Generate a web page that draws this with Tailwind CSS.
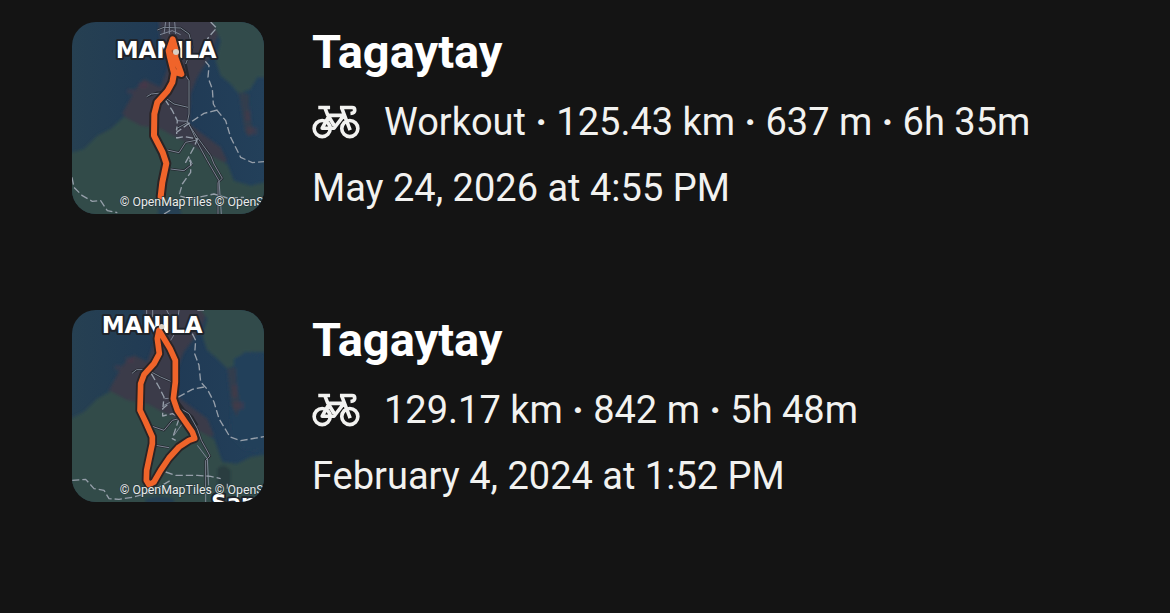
<!DOCTYPE html>
<html lang="en">
<head>
<meta charset="utf-8">
<meta name="viewport" content="width=device-width, initial-scale=1">
<title>Activities</title>
<script src="https://cdn.jsdelivr.net/npm/@tailwindcss/browser@4"></script>
</head>
<body class="min-h-screen bg-[#141414] font-['Roboto',sans-serif] text-[#f2f2f0]">
<svg class="absolute size-0" aria-hidden="true">
  <defs>
    <linearGradient id="sea" x2="1"><stop offset="0" stop-color="#264052"/><stop offset=".5" stop-color="#203a55"/><stop offset="1" stop-color="#23405a"/></linearGradient>
    <filter id="soft" x="-10%" y="-10%" width="120%" height="120%"><feGaussianBlur stdDeviation="5"/></filter>
  </defs>
  <symbol id="bike" viewBox="35 31 146 102">
    <g fill="none" stroke="currentColor" stroke-width="11" stroke-linejoin="round">
      <circle cx="66" cy="102" r="24.5"/>
      <circle cx="150" cy="102" r="24.5"/>
      <path d="M54 38H90M74 38L82 59L102 92M82 62H130M132 62L102 101H66L86 65M120 38H157Q165 38 165 46Q165 55 152 56M125 38L151 107"/>
    </g>
  </symbol>
</svg>
<main class="flex flex-col gap-22 px-18 pt-[22px]">
  <article class="flex gap-12">
    <svg class="size-48 shrink-0 rounded-3xl" viewBox="24 24 576 576" role="img" aria-label="Route map from Manila to Tagaytay">
      <path fill="url(#sea)" d="M24 24H600V600H24Z"/>
      <g filter="url(#soft)">
        <path fill="#3a3b4a" d="M284 10H470L460 70L430 140L400 190L380 240L375 330L470 400L490 440L420 470L300 400L190 320L175 298L215 225L240 195L290 220L315 150L290 90Z"/>
        <path fill="#314c4b" d="M440 10H620V190L580 190L560 225L525 240L500 210L470 185L455 140L470 80Z"/>
        <path fill="#304b49" d="M10 420L60 405L100 365L140 345L180 308L230 335L290 345L335 370L370 385L440 425L490 450L510 500L560 515L620 500V620H10Z"/>
        <path fill="#333d4d" d="M525 235L555 240L556 300L568 350L556 370L542 350Z"/>
        <path fill="#553845" opacity=".4" d="M225 205H250V222H225ZM190 225H212V240H190ZM545 290H560V320H545ZM548 340H580V362H548Z"/>
        <path fill="#263f53" d="M285 570Q315 555 345 575L355 610H280Z"/>
      </g>
      <g fill="none" stroke-linejoin="round">
        <path stroke="#24282f" stroke-width="7" d="M280 48L300 40L350 42L375 60L385 100L365 150L375 200V300L370 325L400 370L440 425L450 450L475 493L462 505V600M370 320L400 385L430 440L465 500M302 250L330 270L372 280M310 408L345 416L365 385L400 378M320 465L360 470L385 450M248 248L280 236H300M335 345L372 325"/>
        <path stroke="#7d8594" stroke-width="3" d="M280 48L300 40L350 42L375 60L385 100L365 150M305 24L300 60M316 24V60M332 24L335 60M288 62L325 50L350 62M365 185L375 200V300L370 325L400 370L440 425L450 450L475 493L462 505V600M370 320L400 385L430 440L465 500L472 600M302 250L330 270L372 280M310 408L345 416L365 385L400 378M320 465L360 470L385 450L375 430M248 248L262 240L300 236M335 345L372 325M340 320L372 322"/>
        <path stroke="#969faa" stroke-width="4" stroke-dasharray="22 9" d="M440 24L458 42L442 60L430 75M424 142L435 155L432 190L445 225L448 270L460 290L485 320L500 370L530 430L565 446L600 443M460 288L420 298L375 328L338 355V372L362 368L400 375L390 400L365 445L380 440V475L355 510L345 545L380 555L450 540L490 552L540 550M302 255L325 290L340 320L338 350M24 490L30 520L55 545L85 562L110 560L130 590L160 596M300 600L325 585"/>
      </g>
      <text x="155" y="132" font-family="DejaVu Sans, sans-serif" font-weight="700" font-size="69" fill="#fff" stroke="#20242b" stroke-width="12" paint-order="stroke" stroke-linejoin="round">MANILA</text>
      <g fill="none" stroke-linecap="round" stroke-linejoin="round">
        <path stroke="#2a2426" stroke-width="30" d="M290 548L295 505L307 448L296 415L270 365L271 300L280 265L310 232L325 205L330 178L318 130L314 110L326 76L334 105L334 130L352 180L332 174"/>
        <path stroke="#f0642a" stroke-width="18" d="M290 548L295 505L307 448L296 415L270 365L271 300L280 265L310 232L325 205L330 178L318 130L314 110L326 76L334 105L334 130L352 180L332 174"/>
      </g>
      <circle cx="336" cy="114" r="9" fill="#d9cfc4"/>
      <text x="167" y="575" font-family="Roboto, sans-serif" font-size="37" fill="#e8ebea" stroke="#27383c" stroke-width="4" paint-order="stroke">© OpenMapTiles © OpenS</text>
    </svg>
    <div class="min-w-0">
      <h2 class="text-[47px] leading-[60px] font-bold text-white">Tagaytay</h2>
      <p class="mt-2 flex items-center gap-6 text-[38px] leading-[64px]">
        <svg class="h-[34px] w-12 shrink-0" role="img" aria-label="Ride"><use href="#bike"/></svg>
        <span>Workout <b>·</b> 125.43 km <b>·</b> 637 m <b>·</b> 6h 35m</span>
      </p>
      <p class="text-[38px] leading-[68px]">May 24, 2026 at 4:55 PM</p>
    </div>
  </article>
  <article class="flex gap-12">
    <svg class="size-48 shrink-0 rounded-3xl" viewBox="24 24 576 576" role="img" aria-label="Loop route map between Manila and Tagaytay">
      <path fill="url(#sea)" d="M24 24H600V600H24Z"/>
      <g filter="url(#soft)">
        <path fill="#3a3b4a" d="M240 10H430L420 60L390 110L360 150L340 200L335 280L430 350L450 400L380 430L260 360L150 290L135 265L175 190L210 160L250 180L275 110L245 50Z"/>
        <path fill="#314c4b" d="M400 10H620V150L540 150L520 185L490 200L460 170L430 145L415 100L430 50Z"/>
        <path fill="#304b49" d="M10 355L60 330L100 290L140 268L190 295L250 305L295 330L330 345L400 385L450 410L475 480L520 485L560 465L620 455V620H10Z"/>
        <path fill="#23405a" d="M510 170L550 150L620 175V450L540 440L500 400Z"/>
        <path fill="#333d4d" d="M490 200L515 195L520 260L530 310L518 345L502 310Z"/>
        <path fill="#553845" opacity=".4" d="M185 165H208V182H185ZM152 190H170V204H152ZM505 250H520V285H505ZM508 300H540V322H508Z"/>
        <path fill="#263f53" d="M245 590Q290 575 330 590V610H245Z"/>
        <path fill="#293c3f" d="M460 500Q480 480 500 505V560H460Z"/>
      </g>
      <g fill="none" stroke-linejoin="round">
        <path stroke="#24282f" stroke-width="7" d="M335 290L365 330L400 380L412 415L438 462L425 475V570M345 310L385 345L400 370M262 210L290 225L325 240M265 373L300 385L325 355L345 350M275 430L315 437M204 212L220 203H250"/>
        <path stroke="#7d8594" stroke-width="3" d="M248 24V45M266 24V45M308 24L318 45M345 24L340 60M335 90L320 115L300 125M335 290L350 320L375 335L400 380L412 415L438 462L425 475V600M400 430L430 470L434 550M262 210L290 225L325 240M265 373L300 385L325 355L345 350M275 430L315 437M204 214L218 203H250M302 290L325 288M300 310L320 300M330 400L355 365L370 370"/>
        <path stroke="#969faa" stroke-width="4" stroke-dasharray="22 9" d="M400 24H420M385 95L395 115L392 155L405 190L410 240L430 262L450 300L465 350L498 405L530 416L600 404M420 255L385 262L325 295L296 320V342L325 335L345 345M262 215L285 255L300 285L297 315M345 350L325 410L335 415M24 535L65 532L90 560L120 565L135 590L165 592L210 585L260 570L320 535M305 510L335 520H400L440 523L470 530M490 545V560"/>
      </g>
      <text x="113" y="93" font-family="DejaVu Sans, sans-serif" font-weight="700" font-size="69" fill="#fff" stroke="#20242b" stroke-width="12" paint-order="stroke" stroke-linejoin="round">MANILA</text>
      <text x="442" y="623" font-family="DejaVu Sans, sans-serif" font-weight="700" font-size="64" fill="#fff" stroke="#20242b" stroke-width="12" paint-order="stroke" stroke-linejoin="round">San</text>
      <g fill="none" stroke-linecap="round" stroke-linejoin="round">
        <path stroke="#2a2426" stroke-width="28" d="M285 85L280 110L286 155L270 185L240 218L230 245L228 325L245 360L265 405V425L248 505L247 535L255 548L270 540L290 505L315 468L345 435L375 415L392 409L385 390L340 325L328 290L334 240V175L318 140Z"/>
        <path stroke="#f0642a" stroke-width="17" d="M285 85L280 110L286 155L270 185L240 218L230 245L228 325L245 360L265 405V425L248 505L247 535L255 548L270 540L290 505L315 468L345 435L375 415L392 409L385 390L340 325L328 290L334 240V175L318 140Z"/>
      </g>
      <circle cx="293" cy="74" r="8" fill="#d9cfc4"/>
      <text x="167" y="575" font-family="Roboto, sans-serif" font-size="37" fill="#e8ebea" stroke="#27383c" stroke-width="4" paint-order="stroke">© OpenMapTiles © OpenS</text>
    </svg>
    <div class="min-w-0">
      <h2 class="text-[47px] leading-[60px] font-bold text-white">Tagaytay</h2>
      <p class="mt-2 flex items-center gap-6 text-[38px] leading-[64px]">
        <svg class="h-[34px] w-12 shrink-0" role="img" aria-label="Ride"><use href="#bike"/></svg>
        <span>129.17 km <b>·</b> 842 m <b>·</b> 5h 48m</span>
      </p>
      <p class="text-[38px] leading-[68px]">February 4, 2024 at 1:52 PM</p>
    </div>
  </article>
</main>
</body>
</html>
